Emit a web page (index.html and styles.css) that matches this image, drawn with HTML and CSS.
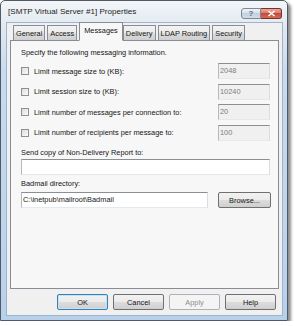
FILE: index.html
```html
<!DOCTYPE html>
<html>
<head>
<meta charset="utf-8">
<link rel="stylesheet" href="styles.css">
</head>
<body>
<div class="window">
  <div class="titlebar">
    <span class="title">[SMTP Virtual Server #1] Properties</span>
    <div class="caption">
      <div class="capbtn help">?</div>
      <div class="capbtn close"><svg width="9" height="7" viewBox="0 0 9 7"><path d="M1.5 1 L7.5 6 M7.5 1 L1.5 6" stroke="#fff" stroke-width="1.6" fill="none"/></svg></div>
    </div>
  </div>
  <div class="client">
    <div class="tabs">
      <div class="tab">General</div>
      <div class="tab">Access</div>
      <div class="tab active">Messages</div>
      <div class="tab">Delivery</div>
      <div class="tab">LDAP Routing</div>
      <div class="tab">Security</div>
    </div>
    <div class="panel">
      <div class="intro">Specify the following messaging information.</div>
      <div class="opts">
        <div class="opt"><span class="cb"></span><span class="lbl">Limit message size to (KB):</span><div class="field dis small">2048</div></div>
        <div class="opt"><span class="cb"></span><span class="lbl">Limit session size to (KB):</span><div class="field dis small">10240</div></div>
        <div class="opt"><span class="cb"></span><span class="lbl">Limit number of messages per connection to:</span><div class="field dis small">20</div></div>
        <div class="opt"><span class="cb"></span><span class="lbl">Limit number of recipients per message to:</span><div class="field dis small">100</div></div>
      </div>
      <div class="caption-lbl ndr">Send copy of Non-Delivery Report to:</div>
      <div class="field wide"></div>
      <div class="caption-lbl bad">Badmail directory:</div>
      <div class="badrow">
        <div class="field path">C:\inetpub\mailroot\Badmail</div>
        <div class="btn browse">Browse...</div>
      </div>
    </div>
    <div class="buttons">
      <div class="btn default">OK</div>
      <div class="btn">Cancel</div>
      <div class="btn disabled">Apply</div>
      <div class="btn">Help</div>
    </div>
  </div>
</div>
</body>
</html>
```
FILE: styles.css
```css
body {
  margin: 0;
  background: #fff;
  font-family: "Liberation Sans", Arial, sans-serif;
  font-size: 7.4px;
  color: #151515;
}
.window {
  box-sizing: border-box;
  width: 288px;
  height: 321px;
  border: 1px solid #4f5a66;
  border-radius: 5px 5px 0 0;
  background: linear-gradient(#f4f6f9 0, #e4ebf2 20px, #c8dbee 70px, #b8d1eb 100%);
  box-shadow: 3px 3px 3px rgba(0, 0, 0, 0.45);
  display: flex;
  flex-direction: column;
}
.titlebar {
  height: 21px;
  display: flex;
  align-items: center;
  padding: 0 5px 0 7px;
}
.title {
  flex: 1;
  font-size: 8.1px;
  color: #1c1c1c;
}
.caption {
  display: flex;
  align-self: flex-start;
  margin-top: 7px;
}
.capbtn {
  box-sizing: border-box;
  height: 11px;
  display: flex;
  align-items: center;
  justify-content: center;
  border: 1px solid #7b8896;
}
.help {
  width: 20px;
  border-radius: 3px 0 0 3px;
  background: linear-gradient(#eef3f8, #d3dde8 50%, #c3d0de 50%, #d1dce8);
  color: #566a80;
  font-size: 8px;
  font-weight: bold;
}
.close {
  width: 21px;
  border-left: none;
  border-color: #7a3028;
  border-radius: 0 3px 3px 0;
  background: linear-gradient(#e9a99c, #d9786a 50%, #c54a3a 50%, #d56b58);
}
.client {
  box-sizing: border-box;
  flex: 1;
  margin: 0 4px 4px 5px;
  background: #f0f0f0;
  border: 1px solid #9fb3ca;
  padding: 0 3px 0 3px;
  display: flex;
  flex-direction: column;
}
.tabs {
  height: 18px;
  display: flex;
  align-items: flex-end;
  padding-left: 3px;
  position: relative;
  z-index: 1;
  margin-bottom: -1px;
}
.tab {
  box-sizing: border-box;
  height: 16px;
  padding: 0 2px;
  margin-right: 2px;
  border: 1px solid #898c95;
  background: linear-gradient(#f3f3f3, #ebebeb 50%, #dddddd 50%, #cfcfcf);
  display: flex;
  align-items: center;
  color: #151515;
}
.tab.active {
  height: 19px;
  margin: 0;
  padding: 0 4px 2px;
  background: #f7f7f7;
  border-bottom-color: #f7f7f7;
}
.panel {
  box-sizing: border-box;
  height: 249px;
  border: 1px solid #898c95;
  background: #f7f7f7;
  padding: 7px 8px 0 10px;
}
.intro {
  height: 10px;
  line-height: 10px;
}
.opts {
  margin-top: 5px;
  display: flex;
  flex-direction: column;
  gap: 4.5px;
}
.opt {
  display: flex;
  align-items: center;
  height: 16px;
}
.cb {
  box-sizing: border-box;
  width: 8px;
  height: 8px;
  border: 1px solid #8e8f8f;
  background: linear-gradient(135deg, #dcdcdc, #fbfbfb);
  flex: none;
}
.lbl {
  margin-left: 5px;
}
.field {
  box-sizing: border-box;
  height: 16px;
  border: 1px solid;
  border-color: #8b8e92 #dadde1 #e5e8ec #b5b8bc;
  background: #fff;
  padding-left: 1px;
  line-height: 14px;
  color: #151515;
}
.field.dis {
  background: #f0f0f0;
  color: #7d7d7d;
}
.field.small {
  width: 52px;
  margin-left: auto;
}
.caption-lbl {
  height: 10px;
  line-height: 10px;
}
.ndr {
  margin-top: 7px;
}
.field.wide {
  margin-top: 1.5px;
}
.bad {
  margin-top: 4px;
}
.badrow {
  margin-top: 3px;
  display: flex;
  align-items: center;
}
.field.path {
  width: 187px;
}
.btn {
  box-sizing: border-box;
  width: 51px;
  height: 16px;
  border: 1px solid #707070;
  border-radius: 2px;
  background: linear-gradient(#f2f2f2, #ebebeb 50%, #dddddd 50%, #cfcfcf);
  display: flex;
  align-items: center;
  justify-content: center;
  color: #151515;
}
.btn.browse {
  width: 53px;
  margin-left: auto;
  margin-right: -1px;
}
.btn.default {
  border-color: #3c7fb1;
  box-shadow: inset 0 0 0 1px #bfe4f7;
}
.btn.disabled {
  border-color: #adb2b5;
  background: #f4f4f4;
  color: #8d8d8d;
}
.buttons {
  margin-top: 5px;
  display: flex;
  justify-content: flex-end;
  gap: 5px;
  padding-right: 3px;
}
```
